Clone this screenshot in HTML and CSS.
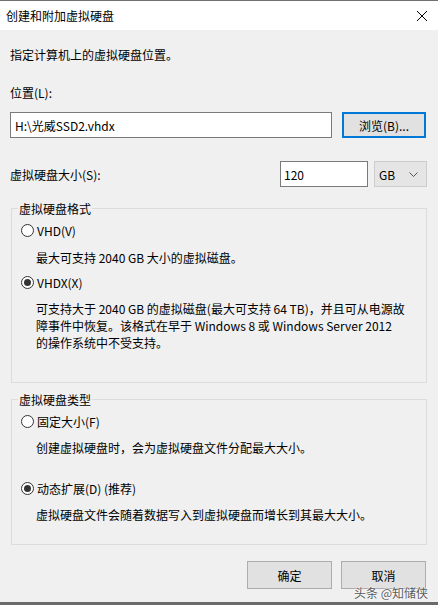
FILE: index.html
```html
<!DOCTYPE html>
<html lang="zh-CN">
<head>
  <meta charset="UTF-8" />
  <meta name="viewport" content="width=device-width, initial-scale=1.0"/>
  <title>创建和附加虚拟硬盘</title>
  <link rel="stylesheet" href="styles.css">
</head>
<body>

  <div class="dialog">
    <!-- Title Bar -->
    <div class="titlebar">
      <span class="title">创建和附加虚拟硬盘</span>
      <svg class="close" width="12" height="12" viewBox="0 0 12 12">
        <path d="M1 1 L11 11 M11 1 L1 11" stroke="#000" stroke-width="1" fill="none"/>
      </svg>
    </div>

    <!-- Main Content -->
    <div class="content">
      <div class="intro">指定计算机上的虚拟硬盘位置。</div>

      <div class="field-label">位置(L):</div>
      <div class="location-row">
        <div class="textbox path">H:\光威SSD2.vhdx</div>
        <div class="btn btn-default">浏览(B)...</div>
      </div>

      <div class="size-row">
        <span class="size-label">虚拟硬盘大小(S):</span>
        <div class="textbox size">120</div>
        <div class="select">
          <span>GB</span>
          <svg width="9" height="5" viewBox="0 0 9 5">
            <path d="M0.5 0.5 L4.5 4.5 L8.5 0.5" stroke="#555" stroke-width="1" fill="none"/>
          </svg>
        </div>
      </div>

      <fieldset class="group">
        <legend>虚拟硬盘格式</legend>
        <div class="radio-row">
          <span class="radio"></span>
          <span>VHD(V)</span>
        </div>
        <div class="desc">最大可支持 2040 GB 大小的虚拟磁盘。</div>
        <div class="radio-row">
          <span class="radio checked"></span>
          <span>VHDX(X)</span>
        </div>
        <div class="desc">可支持大于 2040 GB 的虚拟磁盘(最大可支持 64 TB)，并且可从电源故<br>障事件中恢复。该格式在早于 Windows 8 或 Windows Server 2012<br>的操作系统中不受支持。</div>
      </fieldset>

      <fieldset class="group type-group">
        <legend>虚拟硬盘类型</legend>
        <div class="radio-row">
          <span class="radio"></span>
          <span>固定大小(F)</span>
        </div>
        <div class="desc">创建虚拟硬盘时，会为虚拟硬盘文件分配最大大小。</div>
        <div class="radio-row spaced">
          <span class="radio checked"></span>
          <span>动态扩展(D) (推荐)</span>
        </div>
        <div class="desc">虚拟硬盘文件会随着数据写入到虚拟硬盘而增长到其最大大小。</div>
      </fieldset>

      <!-- Buttons -->
      <div class="footer">
        <div class="btn">确定</div>
        <div class="btn">取消</div>
      </div>
    </div>

    <div class="watermark">头条 @知储侠</div>
  </div>

</body>
</html>
```

FILE: styles.css
```css
body {
  margin: 0;
  font-family: "Noto Sans CJK SC", "Noto Sans", sans-serif;
  font-size: 12px;
  line-height: 17px;
  color: #000;
  background-color: #f0f0f0;
}

.dialog {
  position: relative;
  height: 605px;
  box-sizing: border-box;
  border-top: 1px solid #707070;
  border-bottom: 3px solid #6a6a6a;
  overflow: hidden;
}

/* Title Bar */
.titlebar {
  height: 29px;
  background-color: #fff;
  display: flex;
  align-items: center;
  justify-content: space-between;
  padding: 0 10px 0 6px;
}

/* Content */
.content {
  padding: 0 10px;
}

.intro {
  margin-top: 16px;
}

.field-label {
  margin-top: 21px;
}

.location-row {
  display: flex;
  gap: 10px;
  margin-top: 11px;
}

.textbox {
  box-sizing: border-box;
  height: 26px;
  background-color: #fff;
  border: 1px solid #7a7a7a;
  padding: 0 4px;
  display: flex;
  align-items: center;
}

.path {
  width: 322px;
}

.btn {
  box-sizing: border-box;
  width: 85px;
  height: 28px;
  background-color: #e1e1e1;
  border: 1px solid #adadad;
  display: flex;
  align-items: center;
  justify-content: center;
}

.btn-default {
  width: 84px;
  height: 26px;
  border: 2px solid #0078d7;
}

.size-row {
  display: flex;
  align-items: center;
  gap: 6px;
  margin-top: 23px;
  padding-right: 1px;
}

.size-label {
  flex: 1;
}

.size {
  width: 88px;
  padding-left: 3px;
}

.select {
  box-sizing: border-box;
  width: 53px;
  height: 26px;
  background-color: #e5e5e5;
  border: 1px solid #cccccc;
  display: flex;
  align-items: center;
  justify-content: space-between;
  padding: 0 8px 0 4px;
}

/* Group boxes */
.group {
  margin: 13px 1px 0;
  padding: 5px 9px 31px;
  border: 1px solid #dcdcdc;
}

.group legend {
  padding: 0 1px;
  margin-left: -3px;
}

.type-group {
  margin-top: 8px;
  padding-bottom: 21px;
}

.radio-row {
  display: flex;
  align-items: center;
  gap: 3px;
}

.desc + .radio-row {
  margin-top: 8px;
}

.desc + .radio-row.spaced {
  margin-top: 24px;
}

.radio {
  box-sizing: border-box;
  width: 13px;
  height: 13px;
  border: 1px solid #333;
  border-radius: 50%;
  background-color: #fff;
  display: flex;
  align-items: center;
  justify-content: center;
}

.radio.checked::after {
  content: "";
  width: 7px;
  height: 7px;
  border-radius: 50%;
  background-color: #333;
}

.desc {
  margin-top: 10px;
  padding-left: 15px;
}

.type-group .desc,
.radio-row + .desc + .radio-row + .desc {
  margin-top: 9px;
}

/* Footer */
.footer {
  display: flex;
  justify-content: flex-end;
  gap: 9px;
  margin-top: 16px;
  padding-right: 2px;
}

/* Watermark overlay */
.watermark {
  position: absolute;
  right: 10px;
  bottom: 2px;
  font-size: 12px;
  line-height: 15px;
  color: #5a5a5a;
  text-shadow: 0 0 2px #fff, 0 0 2px #fff;
}
```
